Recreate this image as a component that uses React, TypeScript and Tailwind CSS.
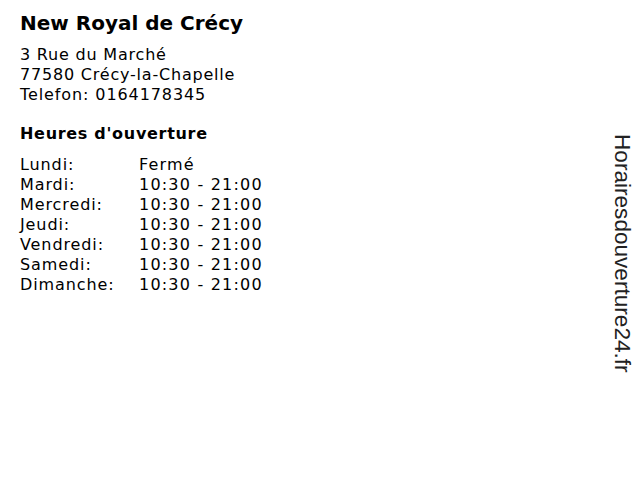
import React from "react";

const hours: [string, string][] = [
  ["Lundi:", "Fermé"],
  ["Mardi:", "10:30 - 21:00"],
  ["Mercredi:", "10:30 - 21:00"],
  ["Jeudi:", "10:30 - 21:00"],
  ["Vendredi:", "10:30 - 21:00"],
  ["Samedi:", "10:30 - 21:00"],
  ["Dimanche:", "10:30 - 21:00"],
];

export default function App() {
  return (
    <div className="relative w-[640px] h-[480px] bg-white text-black overflow-hidden" style={{ fontFamily: '"DejaVu Sans", sans-serif' }}>
      <div className="pl-[20px] pt-[10px]">
        <h1 className="text-[20px] leading-[26px] font-bold">New Royal de Crécy</h1>
        <div className="mt-[9px] text-[16px] leading-[20px] tracking-[0.8px]">
          <div>3 Rue du Marché</div>
          <div>77580 Crécy-la-Chapelle</div>
          <div className="tracking-[0.9px]">Telefon: 0164178345</div>
        </div>
        <h2 className="mt-[19px] text-[16px] leading-[20px] font-bold tracking-[0.7px]">Heures d'ouverture</h2>
        <div className="mt-[11px] text-[16px] leading-[20px]">
          {hours.map(([d, h]) => (
            <div key={d} className="flex">
              <div className="w-[119px] tracking-[0.9px]">{d}</div>
              <div className="tracking-[1.2px]">{h}</div>
            </div>
          ))}
        </div>
      </div>
      <div
        className="absolute right-[6px] top-[134px] text-[22.6px] leading-[24px] text-[#222]"
        style={{ writingMode: "vertical-rl", fontFamily: '"Liberation Sans", Arial, sans-serif' }}
      >
        Horairesdouverture24.fr
      </div>
    </div>
  );
}
